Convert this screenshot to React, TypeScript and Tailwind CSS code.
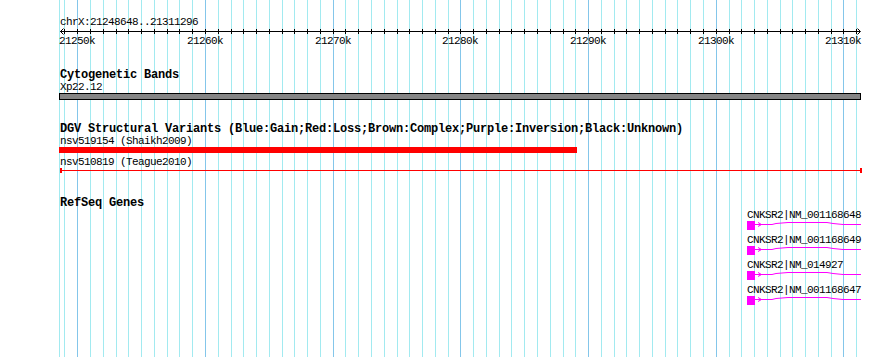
import React from "react";

const START = 21248648;
const END = 21311296;
const X0 = 60;
const W = 800;
const xOf = (bp: number) => X0 + ((bp - START) * W) / (END - START);

const kbs: number[] = [];
for (let k = 21249; k <= 21311; k++) kbs.push(k);

const mono = "font-['Liberation_Mono',monospace]";

function Grid() {
  return (
    <svg className="absolute inset-0" width={890} height={357} shapeRendering="crispEdges">
      <rect x={59} y={0} width={1} height={357} fill="#a2eaf0" />
      {kbs.map((k) => {
        const x = Math.round(xOf(k * 1000));
        const major = k % 10 === 0;
        return <rect key={k} x={x} y={0} width={1} height={357} fill={major ? "#84c6ea" : "#a2eaf0"} />;
      })}
    </svg>
  );
}

function Ruler() {
  // svg spans y 28..48 of page
  return (
    <svg width={890} height={20} className="block" shapeRendering="crispEdges">
      <rect x={60} y={3} width={800} height={1} fill="#000" />
      {kbs.map((k) => {
        const x = Math.round(xOf(k * 1000));
        return <rect key={k} x={x} y={1} width={1} height={5} fill="#000" />;
      })}
      <polyline points="63.5,0.5 60.5,3.5 63.5,6.5" fill="none" stroke="#000" strokeWidth={1} shapeRendering="auto" />
      <polyline points="857.5,0.5 860.5,3.5 857.5,6.5" fill="none" stroke="#000" strokeWidth={1} shapeRendering="auto" />
      {kbs
        .filter((k) => k % 10 === 0)
        .map((k) => {
          const x = Math.round(xOf(k * 1000));
          return (
            <text
              key={k}
              x={x - 18}
              y={16}
              fontFamily="'Liberation Mono', monospace"
              fontSize={11}
              letterSpacing={-0.6}
              fill="#000"
            >
              {`${k}k`}
            </text>
          );
        })}
    </svg>
  );
}

function Small({ children, className = "" }: { children: React.ReactNode; className?: string }) {
  return (
    <div className={`h-[12px] leading-[12px] text-[11px] tracking-[-0.6px] whitespace-pre ${className}`}>{children}</div>
  );
}

function Title({ children, className = "" }: { children: React.ReactNode; className?: string }) {
  return (
    <div className={`h-[12px] leading-[12px] text-[12px] font-bold tracking-[-0.2px] whitespace-pre ${className}`}>
      {children}
    </div>
  );
}

function GeneGlyph() {
  return (
    <svg width={116} height={13} className="block">
      <rect x={0} y={0} width={8} height={9} fill="#ff00ff" shapeRendering="crispEdges" />
      <polyline
        points="8,3.5 25,3.5 29,2.5 41,1.5 80,1.5 86,2.5 96,3.5 114,3.5"
        fill="none"
        stroke="#ff00ff"
        strokeWidth={1}
      />
      <polyline points="11,1.5 14.5,3.5 11,5.5" fill="none" stroke="#ff00ff" strokeWidth={1} />
    </svg>
  );
}

const genes = ["CNKSR2|NM_001168648", "CNKSR2|NM_001168649", "CNKSR2|NM_014927", "CNKSR2|NM_001168647"];

export default function App() {
  return (
    <div className={`relative w-[890px] h-[357px] overflow-hidden bg-white text-black ${mono}`}>
      <Grid />
      <div className="relative flex flex-col">
        <Small className="mt-[16px] pl-[60px]">chrX:21248648..21311296</Small>
        <Ruler />
        <Title className="mt-[21px] pl-[60px]">Cytogenetic Bands</Title>
        <Small className="pl-[60px]">Xp22.12</Small>
        <div className="ml-[59px] w-[802px] h-[7px] border border-black bg-[#858585]" />
        <Title className="mt-[23px] pl-[60px]">
          DGV Structural Variants (Blue:Gain;Red:Loss;Brown:Complex;Purple:Inversion;Black:Unknown)
        </Title>
        <Small className="pl-[60px]">nsv519154 (Shaikh2009)</Small>
        <div className="ml-[59px] w-[518px] h-[6px] bg-[#ff0000]" />
        <Small className="mt-[3px] pl-[60px]">nsv510819 (Teague2010)</Small>
        <div className="ml-[60px] w-[802px] h-[5px] flex items-center">
          <div className="w-[2px] h-[5px] bg-[#ff0000]" />
          <div className="flex-1 h-[1px] bg-[#ff0000]" />
          <div className="w-[2px] h-[5px] bg-[#ff0000]" />
        </div>
        <Title className="mt-[24px] pl-[60px]">RefSeq Genes</Title>
        <div className="ml-[747px] flex flex-col">
          {genes.map((g) => (
            <div key={g} className="flex flex-col">
              <Small>{g}</Small>
              <div className="h-[13px]">
                <GeneGlyph />
              </div>
            </div>
          ))}
        </div>
      </div>
    </div>
  );
}
